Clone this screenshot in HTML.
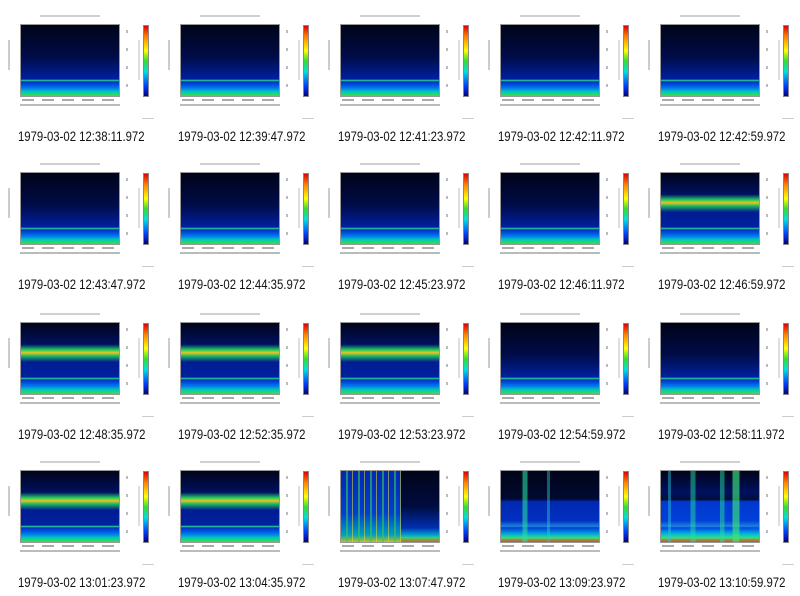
<!DOCTYPE html>
<html><head><meta charset="utf-8"><style>
body{margin:0;width:800px;height:596px;background:#fff;overflow:hidden;position:relative;font-family:"Liberation Sans",sans-serif}
.c{position:absolute;width:160px;height:148px}
.t{position:absolute;left:40px;top:15px;width:60px;height:2px;background:#d0d0d0}
.p{position:absolute;left:20px;top:24px;width:100px;height:73px;border:1px solid #999;box-sizing:border-box;
background:linear-gradient(to bottom,#000418 0%,#000c48 45%,#0020a0 76%,#2c9 78.5%,#0030c0 80%,#0070f0 88%,#00c8c0 94%,#40e030 100%)}
.yl{position:absolute;left:8px;top:40px;width:2px;height:30px;background:#ccc}
.xl{position:absolute;left:22px;top:99px;width:98px;height:2px;background:repeating-linear-gradient(to right,#aaa 0 12px,transparent 12px 20px)}
.xl2{position:absolute;left:20px;top:104px;width:100px;height:2px;background:#bbb}
.cb{position:absolute;left:143px;top:25px;width:6px;height:72px;border:1px solid #888;box-sizing:border-box;
background:linear-gradient(to bottom,#e00000,#ff8000 15%,#ffff00 35%,#30e030 50%,#00e0e0 65%,#0040ff 85%,#000080)}
.cbl{position:absolute;left:126px;top:30px;width:2px;height:60px;background:repeating-linear-gradient(to bottom,#bbb 0 3px,transparent 3px 18px)}
.cl{position:absolute;left:138px;top:40px;width:2px;height:40px;background:#ddd}
.sm{position:absolute;left:142px;top:118px;width:12px;height:1px;background:#ccc}
.cap{position:absolute;left:18px;top:128px;font-size:14px;color:#111;white-space:nowrap;transform:scaleX(.81);transform-origin:0 0}
.band{background:linear-gradient(to bottom,#000418 0%,#001060 30%,#20d060 38%,#f0c020 42%,#20c060 46%,#001c90 55%,#0020a0 76%,#2c9 78.5%,#0030c0 80%,#0070f0 88%,#00c8c0 94%,#40e030 100%)}
.streak{background:linear-gradient(to bottom,#000418 0%,#000c40 50%,#0030b0 80%,#00a0d0 90%,#30d080 94%,#e06010 100%) 60px 0/40px 100% no-repeat,repeating-linear-gradient(to right,transparent 0 5px,rgba(60,200,80,.6) 5px 7px,transparent 7px 11px,rgba(230,220,40,.55) 11px 12px),linear-gradient(to bottom,#0028b0 0%,#0040d0 60%,#00a0c0 90%,#c0c020 100%)}
.b1{background:linear-gradient(to right,transparent 0 22%,rgba(40,220,160,.6) 22% 27%,transparent 27% 47%,rgba(40,200,200,.45) 47% 50%,transparent 50%),linear-gradient(to bottom,#000418 0%,#000a30 38%,#000a40 40%,#0028b0 43%,#0030c0 70%,#2080e0 78%,#0040d0 80%,#00a0e0 88%,#30e080 94%,#f04010 100%)}
.b2{background:linear-gradient(to right,transparent 0 7%,rgba(40,200,220,.45) 7% 10%,transparent 10% 30%,rgba(40,220,160,.5) 30% 35%,transparent 35% 60%,rgba(40,220,160,.5) 60% 65%,transparent 65% 73%,rgba(60,230,120,.65) 73% 80%,transparent 80%),linear-gradient(to bottom,#000418 0%,#001060 30%,#001040 38%,#000a30 40%,#0038d0 43%,#0040d8 70%,#2080e0 78%,#0048e0 80%,#00b0e0 88%,#30e080 94%,#f04010 100%)}
</style></head><body>
<script>
var caps=["1979-03-02 12:38:11.972","1979-03-02 12:39:47.972","1979-03-02 12:41:23.972","1979-03-02 12:42:11.972","1979-03-02 12:42:59.972",
"1979-03-02 12:43:47.972","1979-03-02 12:44:35.972","1979-03-02 12:45:23.972","1979-03-02 12:46:11.972","1979-03-02 12:46:59.972",
"1979-03-02 12:48:35.972","1979-03-02 12:52:35.972","1979-03-02 12:53:23.972","1979-03-02 12:54:59.972","1979-03-02 12:58:11.972",
"1979-03-02 13:01:23.972","1979-03-02 13:04:35.972","1979-03-02 13:07:47.972","1979-03-02 13:09:23.972","1979-03-02 13:10:59.972"];
var tops=[0,148,298,446];
var extra={9:"band",10:"band",11:"band",12:"band",15:"band",16:"band",17:"streak",18:"b1",19:"b2"};
var h="";
for(var i=0;i<20;i++){var r=Math.floor(i/5),c=i%5;
h+='<div class="c" style="left:'+(c*160)+'px;top:'+tops[r]+'px"><div class="t"></div><div class="yl"></div><div class="p '+(extra[i]||"")+'"></div><div class="xl"></div><div class="xl2"></div><div class="cbl"></div><div class="cb"></div><div class="cl"></div><div class="sm"></div><div class="cap">'+caps[i]+'</div></div>';}
document.write(h);
</script>
</body></html>
